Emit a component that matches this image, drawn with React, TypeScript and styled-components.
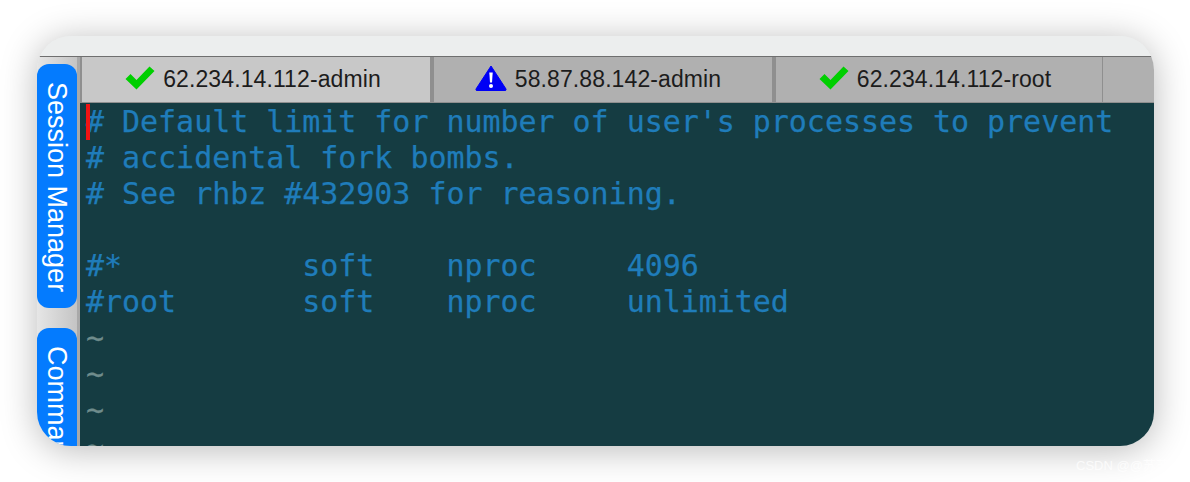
import styled, { createGlobalStyle } from 'styled-components'

const GlobalStyle = createGlobalStyle`
  html, body {
    margin: 0;
    padding: 0;
    background: #fff;
  }
`

const Page = styled.div`
  position: relative;
  width: 1190px;
  height: 482px;
  overflow: hidden;
  box-sizing: border-box;
  padding: 36px 36px 36px 37px;
  background: #fff;
`

const Window = styled.div`
  height: 410px;
  display: flex;
  flex-direction: column;
  overflow: hidden;
  border-radius: 34px;
  background: #eceeee;
  box-shadow: 0 4px 36px rgba(0, 0, 0, 0.28);
`

const TitleBar = styled.div`
  flex: 0 0 20px;
  background: #eceeee;
  border-bottom: 1px solid #6f6f6f;
`

const Main = styled.div`
  flex: 1;
  min-height: 0;
  display: flex;
`

const Sidebar = styled.div`
  flex: 0 0 40px;
  display: flex;
  flex-direction: column;
  gap: 20px;
  padding-top: 7px;
  overflow: hidden;
  border-right: 3px solid #a9a9a9;
  background: linear-gradient(90deg, #e6e6e6, #c4c4c4);
`

const SideTab = styled.div<{ $height: number }>`
  flex: 0 0 ${({ $height }) => $height}px;
  box-sizing: border-box;
  padding-top: 18px;
  border-radius: 12px;
  background: #047bfe;
  color: #fff;
  font-family: 'Liberation Sans', Arial, sans-serif;
  font-size: 27px;
  line-height: 40px;
  white-space: nowrap;
  writing-mode: vertical-rl;
`

const Content = styled.div`
  flex: 1;
  min-width: 0;
  display: flex;
  flex-direction: column;
`

const TabBar = styled.div`
  flex: 0 0 45px;
  display: flex;
  background: #b0b0b0;
  border-left: 2px solid #8f8f8f;
  border-bottom: 1px solid #8f8f8f;
`

const Tab = styled.div<{ $width: number; $pad: number; $active?: boolean; $thin?: boolean }>`
  flex: 0 0 ${({ $width }) => $width}px;
  box-sizing: border-box;
  display: flex;
  align-items: center;
  justify-content: center;
  gap: 8px;
  padding-right: ${({ $pad }) => $pad}px;
  border-right: ${({ $thin }) => ($thin ? 1 : 4)}px solid #8f8f8f;
  background: ${({ $active }) => ($active ? '#c8c8c8' : '#b0b0b0')};
  color: #1c1c1c;
  font-family: 'Liberation Sans', Arial, sans-serif;
  font-size: 23px;
  letter-spacing: 0.1px;
`

const TabIcon = styled.svg`
  flex: none;
  margin-bottom: 4px;
`

const Terminal = styled.pre`
  position: relative;
  flex: 1;
  min-height: 0;
  margin: 0;
  padding: 1px 0 0 6px;
  overflow: hidden;
  background: #153c42;
  color: #1f7cba;
  font-family: 'DejaVu Sans Mono', monospace;
  font-size: 30px;
  letter-spacing: -0.04px;
  line-height: 36px;
  -webkit-text-stroke: 0.25px currentColor;
`

const Cursor = styled.span`
  position: absolute;
  left: 6px;
  top: 1px;
  width: 4px;
  height: 36px;
  background: #f01414;
`

const Tilde = styled.span`
  color: #6f8c8c;
`

const Watermark = styled.div`
  position: absolute;
  left: 1076px;
  top: 455px;
  color: rgba(255, 255, 255, 0.75);
  font-family: 'Liberation Sans', 'Noto Sans CJK SC', sans-serif;
  font-size: 13px;
  white-space: nowrap;
`

function CheckIcon() {
  return (
    <TabIcon width="30" height="24" viewBox="0 0 30 24">
      <path d="M0.5 13 L5.5 8 L11.5 14 L24.5 0.5 L29.5 5 L11.5 23.5 Z" fill="#00cf00" />
    </TabIcon>
  )
}

function WarnIcon() {
  return (
    <TabIcon width="32" height="26" viewBox="0 0 32 26">
      <path d="M16 1 L31 24 Q31.5 25.5 30 25.5 L2 25.5 Q0.5 25.5 1 24 Z" fill="#0000f5" stroke="#0000f5" strokeLinejoin="round" />
      <path d="M14.3 7.5 h3.4 l-0.7 10 h-2 Z" fill="#fff" />
      <circle cx="16" cy="21" r="2" fill="#fff" />
    </TabIcon>
  )
}

const lines = [
  "# Default limit for number of user's processes to prevent",
  '# accidental fork bombs.',
  '# See rhbz #432903 for reasoning.',
  '',
  '#*          soft    nproc     4096',
  '#root       soft    nproc     unlimited',
]

export default function App() {
  return (
    <Page>
      <GlobalStyle />
      <Window>
        <TitleBar />
        <Main>
          <Sidebar>
            <SideTab $height={244}>Session Manager</SideTab>
            <SideTab $height={244}>Command Window</SideTab>
          </Sidebar>
          <Content>
            <TabBar>
              <Tab $width={352} $pad={6} $active>
                <CheckIcon />
                62.234.14.112-admin
              </Tab>
              <Tab $width={342} $pad={10}>
                <WarnIcon />
                58.87.88.142-admin
              </Tab>
              <Tab $width={327} $pad={8} $thin>
                <CheckIcon />
                62.234.14.112-root
              </Tab>
            </TabBar>
            <Terminal>
              <Cursor />
              {lines.join('\n')}
              {'\n'}
              <Tilde>{'~\n~\n~\n~'}</Tilde>
            </Terminal>
          </Content>
        </Main>
      </Window>
      <Watermark>CSDN @@苏苏</Watermark>
    </Page>
  )
}
